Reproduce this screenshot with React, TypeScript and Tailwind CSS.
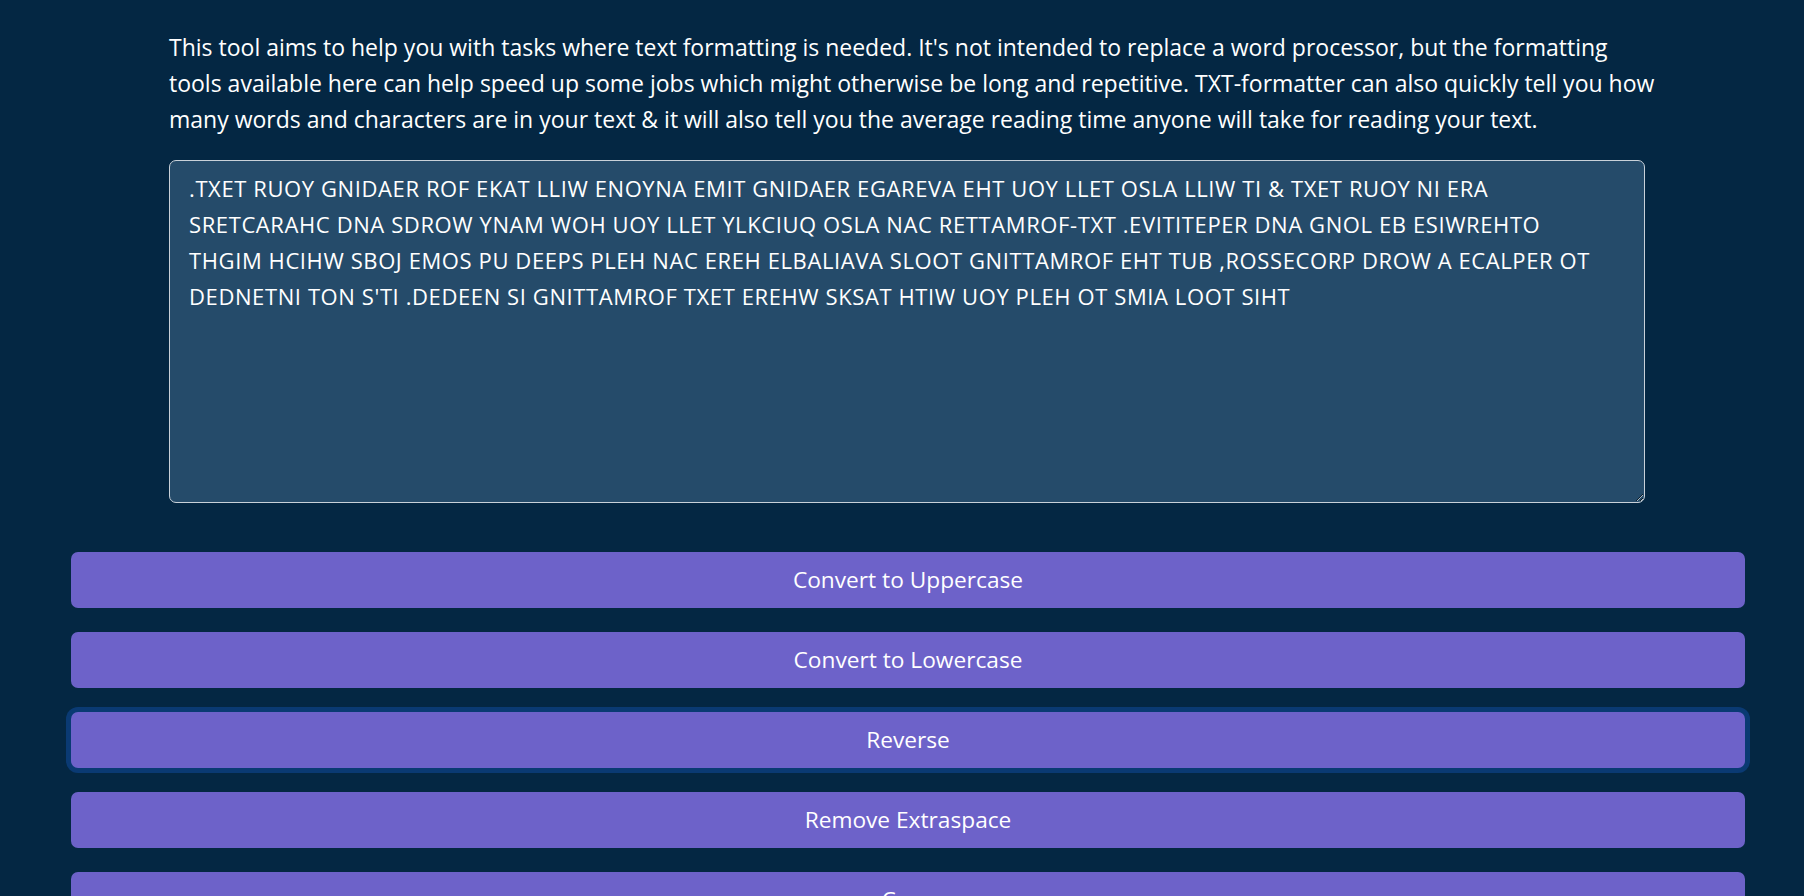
import { useState } from "react";

const intro = [
  "This tool aims to help you with tasks where text formatting is needed. It's not intended to replace a word processor, but the formatting",
  "tools available here can help speed up some jobs which might otherwise be long and repetitive. TXT-formatter can also quickly tell you how",
  "many words and characters are in your text & it will also tell you the average reading time anyone will take for reading your text.",
];

const initialText = [
  ".TXET RUOY GNIDAER ROF EKAT LLIW ENOYNA EMIT GNIDAER EGAREVA EHT UOY LLET OSLA LLIW TI & TXET RUOY NI ERA",
  "SRETCARAHC DNA SDROW YNAM WOH UOY LLET YLKCIUQ OSLA NAC RETTAMROF-TXT .EVITITEPER DNA GNOL EB ESIWREHTO",
  "THGIM HCIHW SBOJ EMOS PU DEEPS PLEH NAC EREH ELBALIAVA SLOOT GNITTAMROF EHT TUB ,ROSSECORP DROW A ECALPER OT",
  "DEDNETNI TON S'TI .DEDEEN SI GNITTAMROF TXET EREHW SKSAT HTIW UOY PLEH OT SMIA LOOT SIHT",
].join("\n");

const actions = [
  "Convert to Uppercase",
  "Convert to Lowercase",
  "Reverse",
  "Remove Extraspace",
  "Copy",
];

export default function App() {
  const [text, setText] = useState(initialText);
  const focused = "Reverse";

  return (
    <main className="min-h-dvh bg-[#042743] pl-[71px] pr-[59px] pt-[29px] pb-10 font-['Open_Sans',sans-serif] text-white">
      <section className="ml-[98px] mr-[100px]">
        <p className="text-[23px] leading-[36px]">
          {intro.map((line, i) => (
            <span key={i} className="whitespace-nowrap">
              {line}
              {i < intro.length - 1 && <br />}
            </span>
          ))}
        </p>
        <textarea
          value={text}
          onChange={(e) => setText(e.target.value)}
          wrap="off"
          spellCheck={false}
          className="mt-[23px] block h-[343px] w-full overflow-hidden rounded-[7px] border border-[#c9d1d9] bg-[#254b6a] pl-[19px] pr-4 pt-[9px] text-[22px] leading-[36px] tracking-[0.6px] text-white outline-none"
        />
      </section>

      <div className="mt-[49px] flex flex-col gap-6">
        {actions.map((label) => (
          <button
            key={label}
            className={
              "h-[56px] w-full rounded-[7px] bg-[#6d62c9] pt-px text-[22.7px] text-white " +
              (label === focused ? "ring-[5px] ring-[#0a3a73]" : "")
            }
          >
            {label}
          </button>
        ))}
      </div>
    </main>
  );
}
